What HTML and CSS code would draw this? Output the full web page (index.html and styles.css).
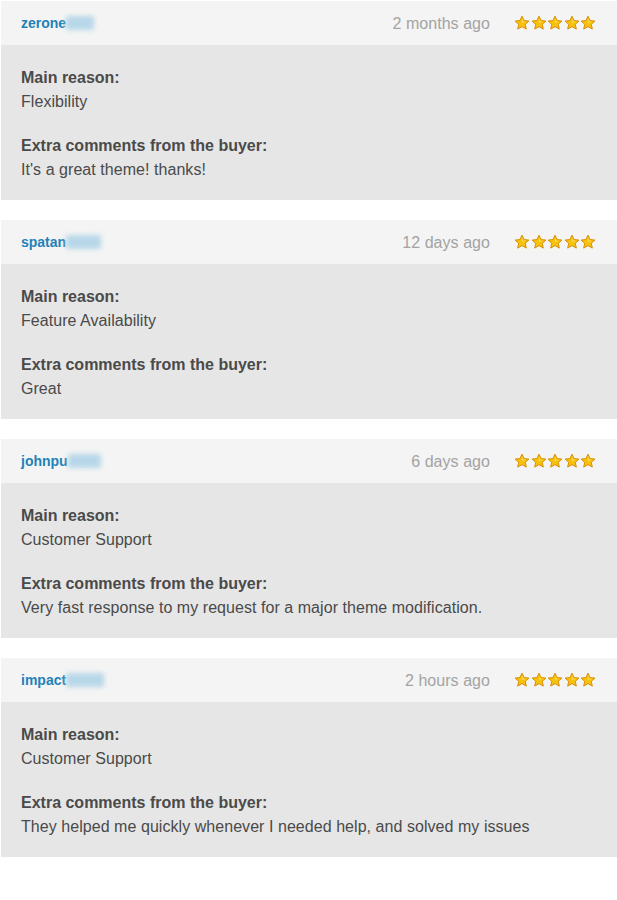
FILE: index.html
```html
<!DOCTYPE html>
<html>
<head>
<meta charset="utf-8">
<link rel="stylesheet" href="styles.css">
</head>
<body>
<svg width="0" height="0" class="defs">
  <defs>
    <symbol id="star" viewBox="0 0 16 16">
      <path d="M8 1.2 L10.1 5.6 L14.9 6.1 L11.3 9.3 L12.3 14.1 L8 11.6 L3.7 14.1 L4.7 9.3 L1.1 6.1 L5.9 5.6 Z" fill="#f7c20c" stroke="#d88f06" stroke-width="1" stroke-linejoin="round"/>
      <path d="M8 3 L9.4 6.4 L12.6 6.8 L8 8 Z" fill="#ffe680" opacity="0.6"/>
    </symbol>
  </defs>
</svg>
<div class="list">
  <div class="card">
    <div class="head">
      <span class="user">zerone<span class="blur b1"></span></span>
      <span class="date">2 months ago</span>
      <span class="stars"><svg><use href="#star"/></svg><svg><use href="#star"/></svg><svg><use href="#star"/></svg><svg><use href="#star"/></svg><svg><use href="#star"/></svg></span>
    </div>
    <div class="body">
      <div class="label">Main reason:</div>
      <div class="text">Flexibility</div>
      <div class="label gap">Extra comments from the buyer:</div>
      <div class="text">It's a great theme! thanks!</div>
    </div>
  </div>
  <div class="card">
    <div class="head">
      <span class="user">spatan<span class="blur b2"></span></span>
      <span class="date">12 days ago</span>
      <span class="stars"><svg><use href="#star"/></svg><svg><use href="#star"/></svg><svg><use href="#star"/></svg><svg><use href="#star"/></svg><svg><use href="#star"/></svg></span>
    </div>
    <div class="body">
      <div class="label">Main reason:</div>
      <div class="text">Feature Availability</div>
      <div class="label gap">Extra comments from the buyer:</div>
      <div class="text">Great</div>
    </div>
  </div>
  <div class="card">
    <div class="head">
      <span class="user">johnpu<span class="blur b3"></span></span>
      <span class="date">6 days ago</span>
      <span class="stars"><svg><use href="#star"/></svg><svg><use href="#star"/></svg><svg><use href="#star"/></svg><svg><use href="#star"/></svg><svg><use href="#star"/></svg></span>
    </div>
    <div class="body">
      <div class="label">Main reason:</div>
      <div class="text">Customer Support</div>
      <div class="label gap">Extra comments from the buyer:</div>
      <div class="text">Very fast response to my request for a major theme modification.</div>
    </div>
  </div>
  <div class="card">
    <div class="head">
      <span class="user">impact<span class="blur b4"></span></span>
      <span class="date">2 hours ago</span>
      <span class="stars"><svg><use href="#star"/></svg><svg><use href="#star"/></svg><svg><use href="#star"/></svg><svg><use href="#star"/></svg><svg><use href="#star"/></svg></span>
    </div>
    <div class="body">
      <div class="label">Main reason:</div>
      <div class="text">Customer Support</div>
      <div class="label gap">Extra comments from the buyer:</div>
      <div class="text">They helped me quickly whenever I needed help, and solved my issues</div>
    </div>
  </div>
</div>
</body>
</html>
```
FILE: styles.css
```css
html, body {
  margin: 0;
  padding: 0;
  background: #fff;
}
body {
  font-family: "Liberation Sans", Arial, sans-serif;
  color: #4a4a4a;
}
.defs {
  position: absolute;
  width: 0;
  height: 0;
}
.list {
  padding: 1px 0 0 1px;
  display: flex;
  flex-direction: column;
  gap: 20px;
}
.card {
  width: 616px;
}
.head {
  height: 44px;
  background: #f4f4f4;
  display: flex;
  align-items: center;
  padding: 0 21px 0 20px;
  box-sizing: border-box;
}
.user {
  font-size: 14px;
  font-weight: bold;
  color: #1f82b8;
  display: flex;
  align-items: center;
  margin-top: -1px;
  flex: 1;
}
.blur {
  display: inline-block;
  height: 14px;
  background: #b7d7e8;
  filter: blur(2.5px);
  border-radius: 2px;
}
.b1 { width: 28px; }
.b2 { width: 35px; }
.b3 { width: 33px; }
.b4 { width: 38px; }
.date {
  font-size: 16px;
  color: #a3a3a3;
  margin-right: 24px;
  margin-top: 1px;
  letter-spacing: 0.05px;
}
.stars {
  display: flex;
  gap: 0.5px;
}
.stars svg {
  width: 16px;
  height: 16px;
}
.body {
  background: #e6e6e6;
  height: 155px;
  padding: 21px 20px 0 20px;
  box-sizing: border-box;
}
.label {
  font-size: 16px;
  font-weight: bold;
  line-height: 24px;
  color: #4a4a4a;
}
.label.gap {
  margin-top: 20px;
}
.text {
  font-size: 16px;
  line-height: 24px;
  color: #4a4a4a;
  letter-spacing: 0.05px;
}
```
